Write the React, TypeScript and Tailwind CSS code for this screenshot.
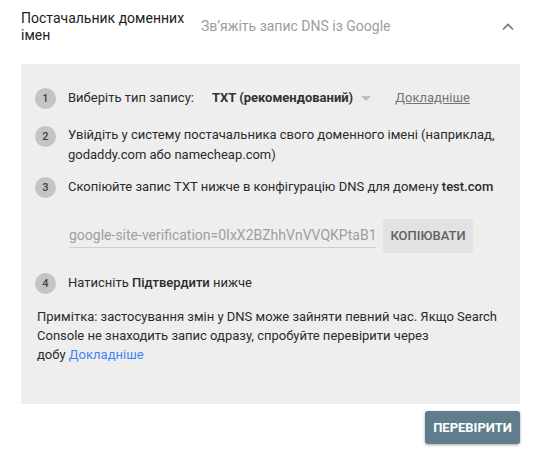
import React from "react";

function Circle({ n }: { n: string }) {
  return (
    <div className="w-[21px] h-[21px] shrink-0 rounded-full bg-[#c4c4c4] flex items-center justify-center text-[11px] font-medium text-[#424242] -ml-[2px] mt-[1px]">
      {n}
    </div>
  );
}

export default function App() {
  return (
    <div
      className="w-[540px] h-[462px] bg-white text-[#2b2b2b]"
      style={{ fontFamily: "Roboto, 'Noto Sans', sans-serif" }}
    >
      <div className="flex items-center pl-[21px] pr-[20px] h-[53px]">
        <div className="w-[180px] shrink-0 text-[14px] leading-[17px] text-[#212121]">
          Постачальник доменних імен
        </div>
        <div className="flex-1 text-[14px] text-[#9e9e9e]">Зв’яжіть запис DNS із Google</div>
        <svg width="16" height="16" viewBox="0 0 16 16" className="mr-[4px]">
          <polyline points="3,10.5 8,5.5 13,10.5" fill="none" stroke="#757575" strokeWidth="1.6" />
        </svg>
      </div>

      <div className="mt-[11px] ml-[21px] w-[499px] h-[340px] bg-[#eeeeee] px-4 pt-[16px] text-[13px] leading-[20px]">
        <div className="flex items-center h-9">
          <Circle n="1" />
          <span className="ml-[12px]">Виберіть тип запису:</span>
          <span className="ml-[18px] font-bold text-[#333]">ТХТ (рекомендований)</span>
          <svg width="12" height="8" viewBox="0 0 12 8" className="ml-[7px]">
            <polygon points="1,2 11,2 6,7" fill="#bdbdbd" />
          </svg>
          <span className="ml-[23px] text-[#757575] underline">Докладніше</span>
        </div>

        <div className="flex items-start mt-[9px]">
          <Circle n="2" />
          <div className="ml-[12px]">
            Увійдіть у систему постачальника свого доменного імені (наприклад, godaddy.com або namecheap.com)
          </div>
        </div>

        <div className="flex items-center mt-[11px]">
          <Circle n="3" />
          <div className="ml-[12px]">
            Скопіюйте запис TXT нижче в конфігурацію DNS для домену <span className="font-medium">test.com</span>
          </div>
        </div>

        <div className="flex items-center ml-[32px] mt-[21px]">
          <div className="w-[307px] border-b border-[#cfcfcf] pb-[2px] text-[14px] text-[#9e9e9e] leading-[20px] whitespace-nowrap overflow-hidden">
            google-site-verification=0IxX2BZhhVnVVQKPtaB1
          </div>
          <div className="ml-[7px] w-[90px] h-[34px] rounded-[3px] bg-[#e2e2e2] flex items-center justify-center text-[13px] font-medium text-[#616161]">
            КОПІЮВАТИ
          </div>
        </div>

        <div className="flex items-center mt-[19px]">
          <Circle n="4" />
          <div className="ml-[12px]">
            Натисніть <span className="font-medium">Підтвердити</span> нижче
          </div>
        </div>

        <div className="mt-[13px] leading-[19px]">
          Примітка: застосування змін у DNS може зайняти певний час. Якщо Search Console не знаходить запис одразу, спробуйте перевірити через{" "}
          <span className="whitespace-nowrap">
            добу <span className="text-[#4285f4]">Докладніше</span>
          </span>
        </div>
      </div>

      <div className="flex justify-end pr-[20px] mt-[7px]">
        <div className="w-[95px] h-[33px] rounded-[3px] bg-[#607d8b] shadow-[0_1px_3px_rgba(0,0,0,0.35)] flex items-center justify-center text-[13px] font-bold text-white">
          ПЕРЕВІРИТИ
        </div>
      </div>
    </div>
  );
}
